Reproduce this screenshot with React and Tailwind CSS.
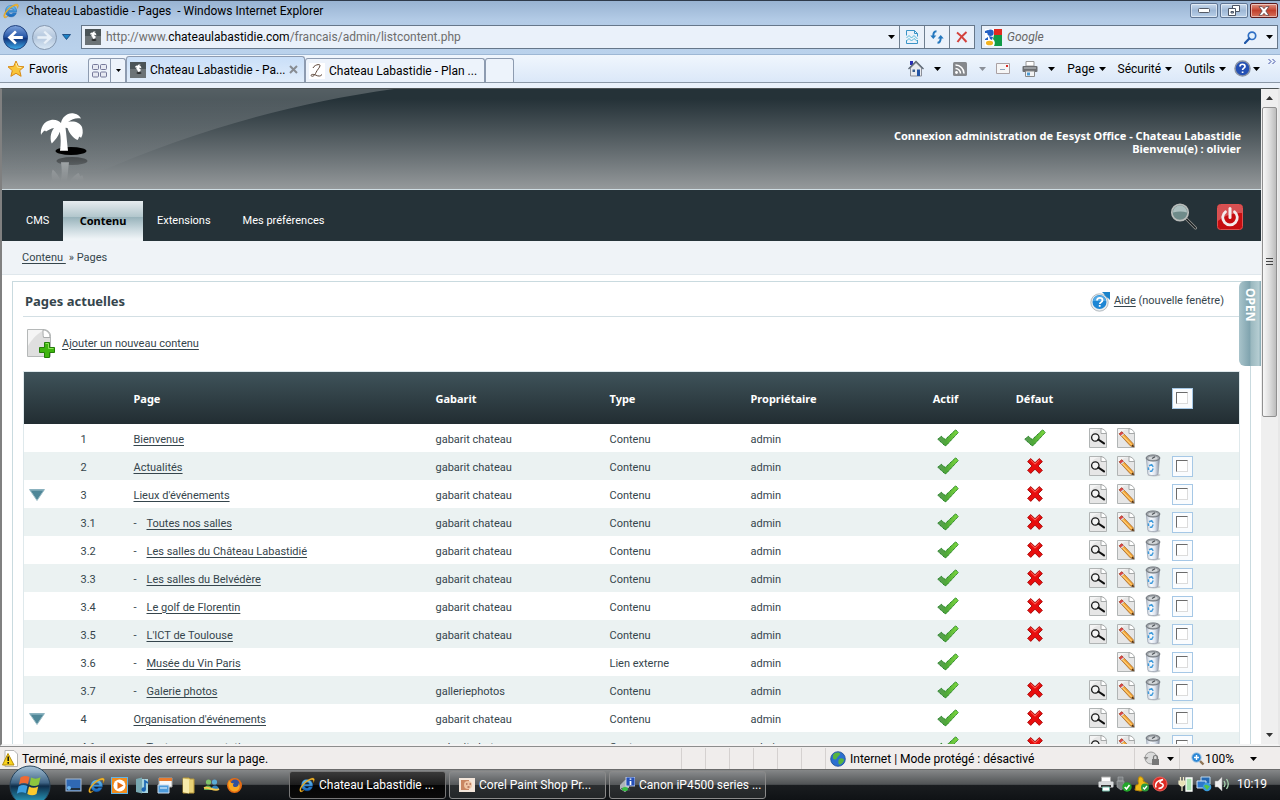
import React from "react";

const pages = [
  { n: "1", name: "Bienvenue", tpl: "gabarit chateau", type: "Contenu", def: "yes", view: true },
  { n: "2", name: "Actualités", tpl: "gabarit chateau", type: "Contenu", def: "no", view: true, trash: true, check: true },
  { n: "3", name: "Lieux d'événements", tpl: "gabarit chateau", type: "Contenu", def: "no", view: true, check: true, open: true },
  { n: "3.1", name: "Toutes nos salles", tpl: "gabarit chateau", type: "Contenu", def: "no", view: true, trash: true, check: true },
  { n: "3.2", name: "Les salles du Château Labastidié", tpl: "gabarit chateau", type: "Contenu", def: "no", view: true, trash: true, check: true },
  { n: "3.3", name: "Les salles du Belvédère", tpl: "gabarit chateau", type: "Contenu", def: "no", view: true, trash: true, check: true },
  { n: "3.4", name: "Le golf de Florentin", tpl: "gabarit chateau", type: "Contenu", def: "no", view: true, trash: true, check: true },
  { n: "3.5", name: "L'ICT de Toulouse", tpl: "gabarit chateau", type: "Contenu", def: "no", view: true, trash: true, check: true },
  { n: "3.6", name: "Musée du Vin Paris", tpl: "", type: "Lien externe", def: "", trash: true, check: true },
  { n: "3.7", name: "Galerie photos", tpl: "galleriephotos", type: "Contenu", def: "no", view: true, trash: true, check: true },
  { n: "4", name: "Organisation d'événements", tpl: "gabarit chateau", type: "Contenu", def: "no", view: true, check: true, open: true },
  { n: "4.1", name: "Toutes nos prestations", tpl: "gabarit chateau", type: "Contenu", def: "no", view: true, trash: true, check: true },
];

/* ---------- shared drawings ---------- */

function Caret({ className = "fill-black" }) {
  return (
    <svg width="7" height="4" viewBox="0 0 7 4" className={"shrink-0 " + className} aria-hidden="true">
      <path d="M0 0h7L3.5 4z" />
    </svg>
  );
}

function IeLogo({ size = 16 }) {
  return (
    <svg width={size} height={size} viewBox="0 0 16 16" className="shrink-0" aria-hidden="true">
      <defs>
        <linearGradient id="ieBlue" x1="0" y1="0" x2="0" y2="1">
          <stop offset="0" stopColor="#6fc8f6" />
          <stop offset="1" stopColor="#1262b8" />
        </linearGradient>
      </defs>
      <path d="M8 2.600a5.600 5.600 0 1 0 5.300 7.500h-3.200A2.700 2.700 0 0 1 5.400 9.200h8.200A5.600 5.600 0 0 0 8 2.600zM5.500 7.200a2.600 2.600 0 0 1 5 0z" fill="url(#ieBlue)" stroke="#1558a6" strokeWidth=".4" />
      <path d="M1.300 14.700C-.8 12.500 3 7.200 6.500 4.500 10.500 1.400 14.300.2 15.200 1.700c.5.900.1 2.300-.9 3.900.3-1.400.2-2.300-.5-2.700-1.600-.8-5.500 1.200-8.400 4.200-2.600 2.700-4 5.500-3.200 6.400.5.500 1.600.3 3-.5-1.500 1.400-3.100 2.500-3.900 1.700z" fill="#f5b92c" stroke="#c8860b" strokeWidth=".3" />
    </svg>
  );
}

function PalmShape() {
  return (
    <path d="M1 24c-1-7 3-14 10-15 5-.6 8 1 10 3 1-6 7-11 13-9.500 4 .8 6 3 7 5-4-1-9 0-13 3.500 6-1.500 12 .5 14 5 1.200 4 1 8-1 11-.5-1-1.200-1.400-2-1.300-.2 1.300-.6 2.200-1.500 3.300-4-2-8-6-10-12l-2-.2c1 7 1.500 15 2.500 23h-8c1-7 1-13-.2-19-1.300 4-4 8-8 11.700C10 29 10 22 14 17c-3 .6-6 2-8 3.500l-1-1C3 20.500 2 22 1 24z" fill="#fff" />
  );
}

function PalmLogo() {
  return (
    <svg width="50" height="76" viewBox="0 0 50 76" aria-hidden="true">
      <defs>
        <linearGradient id="palmFade" x1="0" y1="46" x2="0" y2="70" gradientUnits="userSpaceOnUse">
          <stop offset="0" stopColor="#fff" />
          <stop offset="1" stopColor="#000" />
        </linearGradient>
        <mask id="palmMask"><rect y="42" width="50" height="30" fill="url(#palmFade)" /></mask>
      </defs>
      <ellipse cx="32" cy="40" rx="15.500" ry="4" fill="#000" />
      <g transform="translate(1 0)"><PalmShape /></g>
      <g mask="url(#palmMask)" opacity=".38">
        <ellipse cx="33" cy="50" rx="15.500" ry="4" fill="#000" />
        <g transform="translate(2 91) scale(1 -1)"><PalmShape /></g>
      </g>
    </svg>
  );
}

function PalmFavicon() {
  return (
    <svg width="16" height="16" viewBox="0 0 16 16" className="shrink-0" aria-hidden="true">
      <rect width="16" height="16" fill="#6c7376" />
      <rect width="16" height="7" fill="#4b5457" />
      <path d="M5 5.500c.2-1.500 1.400-2.300 2.700-1.800C8 2.300 9.800 2 11 3c-.9 0-1.500.3-1.800.8 1.500-.1 2.300 1 2 2.700L9.600 5.500 9.500 7h1v2H9.500v1.300H8.200V9H7.500V7h.7L7.500 8 6.300 7l.2-1.800z" fill="#fff" />
      <ellipse cx="9" cy="11" rx="2.600" ry=".8" fill="#111" />
    </svg>
  );
}

function Check() {
  return (
    <svg width="22" height="18" viewBox="0 0 22 18" className="mx-auto block" role="img" aria-label="oui">
      <defs>
        <linearGradient id="okFill" x1="0" y1="0" x2="1" y2="0">
          <stop offset="0" stopColor="#5c9a5c" />
          <stop offset=".4" stopColor="#4fa838" />
          <stop offset="1" stopColor="#7fdb3f" />
        </linearGradient>
      </defs>
      <path d="M.8 10.300l3.400-3 4 3.200L18.600.8l2.700 2.700L9 16.700H8z" fill="url(#okFill)" stroke="#1d7d1d" strokeWidth="1" strokeDasharray="1.500 .5" />
    </svg>
  );
}

function Cross() {
  return (
    <svg width="16" height="16" viewBox="0 0 16 16" className="mx-auto block" role="img" aria-label="non">
      <path d="M3.700.6L8 4.700 12.300.6l3.100 3L11 8l4.400 4.300-3.100 3.100L8 11.200l-4.300 4.200-3.100-3.100L5 8 .6 3.600z" fill="#e80d0d" stroke="#a50808" strokeWidth=".9" strokeLinejoin="round" />
      <path d="M3.700 2L8 6.200 12.300 2" fill="none" stroke="#ff6b5e" strokeWidth="1" />
    </svg>
  );
}

function Sheet() {
  return (
    <>
      <path d="M.5.500h12l5 5v14H.5z" fill="#f4f4f4" stroke="#b0b4b4" />
      <path d="M1 19V8C4 3 8 1.500 12 1v5h5v13z" fill="#e6e6e6" />
      <path d="M12 .5v5h5.500C17 3 15 1 12 .5z" fill="#fff" stroke="#9c9f9f" strokeWidth=".9" />
    </>
  );
}

function ViewIcon() {
  return (
    <svg width="18" height="20" viewBox="0 0 18 20" className="block" aria-hidden="true">
      <Sheet />
      <circle cx="6.300" cy="9.500" r="3.700" fill="#f4f4f4" stroke="#1a1a1a" strokeWidth="1.300" />
      <path d="M9.300 11.500l5.700 3.800" stroke="#111" strokeWidth="2.100" strokeLinecap="round" />
    </svg>
  );
}

function EditIcon() {
  return (
    <svg width="18" height="20" viewBox="0 0 18 20" className="block" aria-hidden="true">
      <Sheet />
      <path d="M2.200 5.800l2.700-2L16 15.500l.9 3.400-3.600-1.100z" fill="#f6a93b" stroke="#9a5a1b" strokeWidth=".7" />
      <path d="M4.800 7l9.700 9.800" stroke="#ffd98c" strokeWidth="1" />
      <path d="M2.200 5.800l2.700-2 1.800 1.900-2.600 2.100z" fill="#e0474a" stroke="#a32d33" strokeWidth=".5" />
      <path d="M4.100 7.900l2.700-2.200" stroke="#d5dade" strokeWidth="1.200" />
      <path d="M15.800 16.500l1.100 2.400-2.500-.7z" fill="#3b2a1e" />
    </svg>
  );
}

function TrashIcon() {
  return (
    <svg width="16" height="23" viewBox="0 0 16 23" className="block" aria-hidden="true">
      <defs>
        <linearGradient id="canFill" x1="0" y1="0" x2="1" y2="0">
          <stop offset="0" stopColor="#b9c3d2" />
          <stop offset=".35" stopColor="#fafcff" />
          <stop offset=".65" stopColor="#dfe6f0" />
          <stop offset="1" stopColor="#858e9f" />
        </linearGradient>
      </defs>
      <ellipse cx="9" cy="21" rx="6.500" ry="1.500" fill="#c4c9cc" />
      <path d="M1.300 4l1.500 16c.2 2 10 2 10.300 0L14.600 4z" fill="url(#canFill)" stroke="#8d95a3" strokeWidth=".6" />
      <ellipse cx="8" cy="4" rx="6.900" ry="3.100" fill="#9ca1a6" stroke="#6c7278" strokeWidth=".9" />
      <ellipse cx="8" cy="4.300" rx="4.700" ry="1.700" fill="#d4d8db" />
      <path d="M7 4.500l3-1.800" stroke="#4b5054" strokeWidth="1.200" />
      <path d="M4 11.800l2.700-1.200 1.500 2.300M8.200 14.500l-1.500 2.800H4.800M3.600 16l-.3-2.600" fill="none" stroke="#3f9bdc" strokeWidth="1.500" />
    </svg>
  );
}

function Box({ label }) {
  return (
    <label className="mt-px flex size-[21px] items-center justify-center border border-[#a6c8e6] bg-[#fafcfe]">
      <input type="checkbox" aria-label={label} className="m-0 block size-3 appearance-none border border-t-[#6b6b6b] border-r-[#dcdcdc] border-b-[#dcdcdc] border-l-[#6b6b6b] bg-white checked:bg-[#4a7fb0]" />
    </label>
  );
}

/* ---------- browser frame ---------- */

function WindowButton({ label, red, children }) {
  return (
    <button
      type="button"
      aria-label={label}
      className={
        "flex h-[15px] w-7 items-center justify-center rounded-[2px] border shadow-[inset_0_0_0_1px_rgba(255,255,255,0.5)] " +
        (red
          ? "border-[#5c1a1c] bg-linear-to-b from-[#dd9383] via-[#c2402c] to-[#d4705b]"
          : "border-[#5f7593] bg-linear-to-b from-[#c8d9ec] via-[#9fb8d6] to-[#b9cfe8]")
      }
    >
      {children}
    </button>
  );
}

function TitleBar() {
  return (
    <header className="flex h-5 items-center gap-1 border-t border-[#2e3a4a] bg-linear-to-b from-[#98b3d2] to-[#b3cbe6] pl-[3px]">
      <IeLogo />
      <h1 className="ml-[3px] flex-1 truncate text-[12px] whitespace-pre">Chateau Labastidie - Pages  - Windows Internet Explorer</h1>
      <div className="flex gap-[2px] pr-[2px]">
        <WindowButton label="Réduire">
          <svg width="12" height="5" viewBox="0 0 12 5"><rect x=".5" y=".5" width="11" height="4" rx="1" fill="#fff" stroke="#555b66" /></svg>
        </WindowButton>
        <WindowButton label="Restaurer">
          <svg width="12" height="11" viewBox="0 0 12 11" fill="#fff" stroke="#4c5564">
            <path d="M4.500.5h7v6h-7z" /><path d="M.5 3.500h7v7h-7z" /><path d="M3 6.500h2.500v1.500H3z" fill="#9fb8d6" />
          </svg>
        </WindowButton>
        <WindowButton label="Fermer" red>
          <svg width="12" height="10" viewBox="0 0 12 10">
            <path d="M1 .6h3.200L6 2.700 7.800.6H11L7.800 5 11 9.400H7.800L6 7.300 4.200 9.400H1L4.200 5z" fill="#fff" stroke="#5b4247" strokeWidth=".8" />
          </svg>
        </WindowButton>
      </div>
    </header>
  );
}

function AddressBar() {
  const cell = "flex w-[25px] shrink-0 items-center justify-center border-l border-[#6f7f90]";
  return (
    <div className="flex h-[34px] items-center bg-linear-to-b from-[#b3cbe6] to-[#bad2ec] pr-[2px] pl-[2px]">
      <div className="flex w-[79px] shrink-0 items-center">
        <button type="button" aria-label="Précédent" className="shrink-0">
          <svg width="27" height="27" viewBox="0 0 27 27">
            <defs>
              <linearGradient id="backBtn" x1="0" y1="0" x2="0" y2="1">
                <stop offset="0" stopColor="#7fa3dc" /><stop offset=".45" stopColor="#2c5cab" /><stop offset=".55" stopColor="#10357e" /><stop offset="1" stopColor="#3fb0ee" />
              </linearGradient>
            </defs>
            <circle cx="13.500" cy="13.500" r="12" fill="url(#backBtn)" stroke="#21427f" />
            <path d="M5.500 13.500L13 6.500v0l1.800 1.800-3.600 3.700h9.600v3h-9.600l3.600 3.700L13 20.500z" fill="#fff" />
          </svg>
        </button>
        <button type="button" aria-label="Suivant" className="ml-[2px] shrink-0">
          <svg width="27" height="27" viewBox="0 0 27 27">
            <defs>
              <linearGradient id="fwdBtn" x1="0" y1="0" x2="0" y2="1">
                <stop offset="0" stopColor="#dbe6f3" /><stop offset=".5" stopColor="#b2c6dd" /><stop offset="1" stopColor="#dbe9f6" />
              </linearGradient>
            </defs>
            <circle cx="13.500" cy="13.500" r="12" fill="url(#fwdBtn)" stroke="#8295ad" />
            <path d="M21.500 13.500L14 6.500l-1.800 1.800 3.600 3.700H6.200v3h9.600l-3.600 3.700 1.800 1.800z" fill="#e8f0f8" stroke="#c2d0e0" strokeWidth=".5" />
          </svg>
        </button>
        <button type="button" aria-label="Pages récentes" className="ml-1 shrink-0">
          <svg width="9" height="6" viewBox="0 0 9 6"><path d="M.5.500h8l-4 5z" fill="#1d83c6" stroke="#123f73" strokeWidth=".8" /></svg>
        </button>
      </div>
      <div className="flex h-6 min-w-0 flex-1 border border-[#66778a] bg-[#eaf1fa]">
        <div className="flex min-w-0 flex-1 items-center gap-1 pl-[3px]">
          <PalmFavicon />
          <div className="min-w-0 flex-1 truncate pl-px text-[12px] text-[#6d6d6d]">
            http://www.<span className="text-black">chateaulabastidie.com</span>/francais/admin/listcontent.php
          </div>
          <button type="button" aria-label="Adresses" className="flex h-full w-4 items-center justify-center"><Caret /></button>
        </div>
        <button type="button" aria-label="Compatibilité" className={cell}>
          <svg width="12" height="14" viewBox="0 0 12 14" fill="none" stroke="#3a93c6">
            <path d="M.5 5.500v-5h8l3 3v3M8.500.5v3h3M.5 10v3.500h11V10" /><path d="M.5 8L3 5.500 5.500 8 8 5.500 11.500 9M.5 11L3 8.500 5.500 11 8 8.500l3.500 3" stroke="#56b8d8" />
          </svg>
        </button>
        <button type="button" aria-label="Actualiser" className={cell}>
          <svg width="14" height="14" viewBox="0 0 14 14" fill="none" stroke="#2477be" strokeWidth="2">
            <path d="M6.500 1.200C4 1.200 3.300 3 3.300 6.500" /><path d="M.3 5.500h6L3.300 9z" fill="#2477be" stroke="none" />
            <path d="M7.500 12.800c2.500 0 3.200-1.800 3.200-5.300" /><path d="M7.700 8.500h6L10.700 5z" fill="#2477be" stroke="none" />
          </svg>
        </button>
        <button type="button" aria-label="Arrêter" className={cell}>
          <svg width="12" height="12" viewBox="0 0 12 12"><path d="M1 1.500c4 3 6 5.500 9.500 9.500M10.500 1C7 4 4 7 1.500 11" fill="none" stroke="#d3413c" strokeWidth="2" /></svg>
        </button>
      </div>
      <form className="ml-[6px] flex h-6 w-[297px] shrink-0 items-center border border-[#66778a] bg-[#eaf1fa] pl-[3px]">
        <svg width="17" height="17" viewBox="0 0 17 17" className="shrink-0" aria-hidden="true">
          <rect width="17" height="17" fill="#fff" />
          <path d="M9 0h8v6H9z" fill="#e02a1f" /><path d="M9 6h8v11H9c1.500-3 1-5-1-7z" fill="#119b47" />
          <path d="M0 2l3-1v3H0zM0 10l3-2v3H0z" fill="#2360c4" />
          <circle cx="5.500" cy="3.800" r="3.200" fill="#2360c4" /><path d="M4 7l4 1-1 3-2-1z" fill="#2360c4" /><ellipse cx="4.500" cy="14" rx="3.600" ry="2.300" fill="#f4b321" />
        </svg>
        <input aria-label="Recherche Google" placeholder="Google" className="ml-[5px] min-w-0 flex-1 bg-transparent text-[12px] italic outline-none placeholder:text-[#666]" />
        <button type="button" aria-label="Rechercher" className="shrink-0 pl-1">
          <svg width="13" height="13" viewBox="0 0 13 13"><circle cx="8" cy="4.800" r="3.700" fill="#e4f1fc" stroke="#2f6fc4" strokeWidth="1.700" /><path d="M5.300 7.500L1 12" stroke="#1f57a8" strokeWidth="2.200" strokeLinecap="round" /></svg>
        </button>
        <button type="button" aria-label="Options de recherche" className="flex h-full w-5 items-center justify-end pr-1"><Caret /></button>
      </form>
    </div>
  );
}

function TabBar() {
  const menu = "flex items-center gap-1 text-[12px]";
  return (
    <div className="flex h-[34px] items-start border-t border-[#9db7d4] bg-[#eaf1fa]">
      <div className="flex h-7 w-full items-end border-b border-[#8a97a6] bg-linear-to-b from-[#f0f6fd] to-[#dbe8f8] pl-[7px]">
        <button type="button" className="flex h-full w-[81px] shrink-0 items-center gap-1 text-[12px]">
          <svg width="18" height="18" viewBox="0 0 18 18" aria-hidden="true"><path d="M9 1l2.300 5.300 5.700.5-4.300 3.800 1.400 5.700L9 13.300l-5.100 3 1.400-5.700L1 6.800l5.700-.5z" fill="#f9c53a" stroke="#d88a14" /><path d="M9 3l1.500 4.200 4 .3" fill="none" stroke="#fff0a8" /></svg>
          Favoris
        </button>
        <div className="flex h-6 w-[38px] shrink-0 rounded-t-[3px] border border-b-0 border-[#8d9bb0] bg-[#edf3fb]">
          <button type="button" aria-label="Aperçu mosaïque" className="flex flex-1 items-center justify-center border-r border-[#8d9bb0]">
            <svg width="15" height="14" viewBox="0 0 15 14" fill="#e6e9f2" stroke="#75799a"><rect x=".5" y=".5" width="6" height="5" rx="1" /><rect x="8.500" y=".5" width="6" height="5" rx="1" /><rect x=".5" y="8" width="6" height="5" rx="1" /><rect x="8.500" y="8" width="6" height="5" rx="1" /></svg>
          </button>
          <button type="button" aria-label="Liste des onglets" className="flex w-[14px] items-center justify-center"><svg width="5" height="3" viewBox="0 0 5 3"><path d="M0 0h5L2.500 3z" /></svg></button>
        </div>
        <div className="flex h-[26px] w-[179px] shrink-0 items-center gap-1 rounded-t-[3px] border border-b-0 border-[#8d9bb0] bg-linear-to-b from-[#c9dff8] to-[#e0ecfa] px-[3px]">
          <PalmFavicon />
          <a href="#onglet" className="min-w-0 flex-1 whitespace-nowrap text-[12px]">Chateau Labastidie - Pa...</a>
          <button type="button" aria-label="Fermer l'onglet" className="px-[3px]">
            <svg width="9" height="9" viewBox="0 0 9 9"><path d="M1 1l7 7M8 1L1 8" stroke="#888c92" strokeWidth="2" /></svg>
          </button>
        </div>
        <div className="flex h-6 w-[180px] shrink-0 items-center gap-1 rounded-t-[3px] border border-b-0 border-[#8d9bb0] bg-[#edf3fb] px-[3px]">
          <svg width="16" height="16" viewBox="0 0 16 16" aria-hidden="true" className="shrink-0"><rect width="16" height="16" fill="#fff" /><path d="M4 5c1-3 7-4.500 7-2.500S8 7 7 9.500 4 14 2.500 13s1-2.500 4-1 5 1.500 6.500-.5" fill="none" stroke="#5b4437" strokeWidth="1" /></svg>
          <a href="#plan" className="min-w-0 whitespace-nowrap text-[12px]">Chateau Labastidie - Plan ...</a>
        </div>
        <button type="button" aria-label="Nouvel onglet" className="h-6 w-[29px] shrink-0 rounded-t-[3px] border border-b-0 border-[#8d9bb0] bg-[#edf3fb]" />
        <nav className="flex h-full min-w-0 flex-1 items-center justify-end gap-3 pr-1" aria-label="Barre de commandes">
          <button type="button" aria-label="Accueil" className="flex items-center gap-[10px]">
            <svg width="16" height="17" viewBox="0 0 16 17"><path d="M2 1h3v4H2z" fill="#2a2fb4" /><path d="M2.500 8v8h11V8L8 2.500z" fill="#e8eaee" stroke="#8b8f99" /><path d="M.5 9L8 1.500 15.500 9" fill="none" stroke="#5c6672" strokeWidth="1.300" /><path d="M9 9.500h3V16H9z" fill="#2456a6" /><path d="M4.500 9.500h2.500V12H4.500z" fill="#3a5f8e" /></svg>
            <Caret />
          </button>
          <button type="button" aria-label="Flux" className="flex items-center gap-3">
            <svg width="14" height="14" viewBox="0 0 14 14"><rect width="14" height="14" rx="1.500" fill="#85888c" /><circle cx="3.500" cy="10.500" r="1.400" fill="#fff" /><path d="M2.500 6.500a5 5 0 0 1 5 5M2.500 3a8.500 8.500 0 0 1 8.500 8.500" fill="none" stroke="#fff" strokeWidth="1.600" /></svg>
            <Caret className="fill-[#8b9098]" />
          </button>
          <button type="button" aria-label="Messagerie" className="-ml-[2px]">
            <svg width="14" height="11" viewBox="0 0 14 11"><path d="M.5.500h13v10H.5z" fill="#f6f6f6" stroke="#aaa1a3" /><path d="M10 2h2v2h-2z" fill="#dc2b26" /><path d="M4 6.500h5" stroke="#8da4bd" /></svg>
          </button>
          <button type="button" aria-label="Imprimer" className="flex items-center gap-[10px]">
            <svg width="16" height="16" viewBox="0 0 16 16"><path d="M4 .5h8V5H4z" fill="#fff" stroke="#999" /><rect x=".5" y="5" width="15" height="6" rx="1" fill="#6b6e72" /><path d="M2 7h12" stroke="#c8ccd0" /><path d="M3.500 10h9v5.500h-9z" fill="#f3f3f3" stroke="#888" /><path d="M5 11.500h3v3H5z" fill="#4c9bd4" /></svg>
            <Caret />
          </button>
          <button type="button" className={menu}>Page <Caret /></button>
          <button type="button" className={menu}>Sécurité <Caret /></button>
          <button type="button" className={menu}>Outils <Caret /></button>
          <button type="button" aria-label="Aide" className="-ml-1 flex items-center gap-[2px]">
            <svg width="17" height="17" viewBox="0 0 17 17"><circle cx="8.500" cy="8.500" r="7.500" fill="#2450b4" stroke="#8a93a3" strokeWidth="1.500" /><path d="M6 6.500C6 3.500 11 3.500 11 6.400c0 1.800-2.400 1.600-2.400 3.600M8.600 11.500v1.600" fill="none" stroke="#fff" strokeWidth="1.700" /></svg>
            <Caret />
          </button>
          <button type="button" aria-label="Plus" className="-ml-1 self-start pt-1">
            <svg width="8" height="5" viewBox="0 0 8 5" fill="none" stroke="#3f4fa4"><path d="M.5 0L3 2.500.5 5M4.500 0L7 2.500 4.500 5" /></svg>
          </button>
        </nav>
      </div>
    </div>
  );
}

/* ---------- site ---------- */

const boldFont = "font-['Noto_Sans','Open_Sans',sans-serif] font-bold";

function SiteHeader() {
  return (
    <div className="relative flex h-[101px] shrink-0 items-center justify-between overflow-hidden border-b border-[#cfdde3] bg-linear-to-b from-[#253238] from-10% to-[#95999b] pr-5 pl-[37px]">
      <svg width="400" height="100" viewBox="0 0 400 100" className="absolute top-0 left-0" aria-hidden="true">
        <defs>
          <linearGradient id="swoosh" x1="0" y1="0" x2="0" y2="1">
            <stop offset="0" stopColor="#fff" stopOpacity=".22" />
            <stop offset=".85" stopColor="#fff" stopOpacity="0" />
          </linearGradient>
        </defs>
        <path d="M0 0h392C290 14 190 42 95 84L0 100z" fill="url(#swoosh)" />
      </svg>
      <a href="#accueil" aria-label="Accueil du site" className="relative mt-5"><PalmLogo /></a>
      <p className={"relative mt-[6px] text-right text-[11px] leading-[13px] text-white " + boldFont}>
        Connexion administration de Eesyst Office - Chateau Labastidie<br />
        Bienvenu(e) : olivier
      </p>
    </div>
  );
}

function MainNav() {
  const item = "flex h-10 items-center px-[14px] text-white";
  return (
    <div className="flex h-[51px] shrink-0 items-end justify-between border-t-2 border-[#253238] bg-[#253238] pr-[18px] pl-[10px] text-[11px]">
      <nav className="flex items-end" aria-label="Navigation principale">
        <a href="#cms" className={item + " w-[51px]"}>CMS</a>
        <a href="#contenu" className={"flex h-10 w-20 items-center justify-center bg-[linear-gradient(to_bottom,#e6ecef_0%,#b3c7cd_39%,#97b2ba_40%,#c9d8de_70%,#eff4f7_95%)] text-black " + boldFont}>Contenu</a>
        <a href="#extensions" className={item}>Extensions</a>
        <a href="#preferences" className={item + " ml-1"}>Mes préférences</a>
      </nav>
      <div className="flex items-center gap-[19px] self-center">
        <button type="button" aria-label="Rechercher">
          <svg width="28" height="27" viewBox="0 0 28 27">
            <path d="M15.500 15l10 10" stroke="#9b9b98" strokeWidth="3" strokeLinecap="round" /><path d="M16 15.500l9.500 9.500" stroke="#1b2022" strokeWidth="1.500" strokeLinecap="round" />
            <circle cx="10" cy="9.500" r="8.200" fill="#6f8b8a" stroke="#b9bcba" strokeWidth="1.700" /><path d="M3 9.500a7 7 0 0 1 14 0c-4-1.500-9-1.500-14 0z" fill="#bccccc" opacity=".8" />
          </svg>
        </button>
        <button type="button" aria-label="Déconnexion">
          <svg width="26" height="26" viewBox="0 0 26 26">
            <rect x=".5" y=".5" width="25" height="25" rx="3" fill="#c60d10" stroke="#e0514f" />
            <path d="M1 3.500Q1 1 3.500 1h19Q25 1 25 3.500V9C17 9 8 11 1 17z" fill="#fff" opacity=".28" />
            <path d="M8.500 7.800a7.300 7.300 0 1 0 9 0" fill="none" stroke="#f3ecec" strokeWidth="2.800" strokeLinecap="round" /><path d="M13 4.500v9" stroke="#f3ecec" strokeWidth="3" strokeLinecap="round" />
          </svg>
        </button>
      </div>
    </div>
  );
}

function PagesTable() {
  const th = "pt-[3px] text-left " + boldFont;
  const thCenter = "pt-[3px] text-center " + boldFont;
  const td = "pt-[5px]";
  return (
    <table className="w-full table-fixed border-collapse border border-[#dfe9ec] text-[11px]">
      <colgroup>
        <col className="w-[57px]" /><col className="w-[53px]" /><col /><col className="w-[174px]" /><col className="w-[141px]" /><col className="w-[154px]" />
        <col className="w-[86px]" /><col className="w-[88px]" /><col className="w-[33px]" /><col className="w-7" /><col className="w-7" /><col className="w-[72px]" />
      </colgroup>
      <thead>
        <tr className="h-[52px] bg-linear-to-b from-[#3f535a] to-[#222d32] text-white">
          <td /><td />
          <th scope="col" className={th}>Page</th>
          <th scope="col" className={th}>Gabarit</th>
          <th scope="col" className={th}>Type</th>
          <th scope="col" className={th}>Propriétaire</th>
          <th scope="col" className={thCenter + " pr-1"}>Actif</th>
          <th scope="col" className={thCenter}>Défaut</th>
          <td /><td /><td />
          <td className="pl-1"><Box label="Tout sélectionner" /></td>
        </tr>
      </thead>
      <tbody>
        {pages.map((p, i) => (
          <tr key={p.n} className={"h-7 " + (i % 2 ? "bg-[#ebf2f2]" : "bg-white")}>
            <td className="pt-[2px] pl-[5px]">
              {p.open && (
                <button type="button" aria-label={"Replier " + p.name} className="block">
                  <svg width="16" height="12" viewBox="0 0 16 12"><path d="M.5.500h15L8 11.500z" fill="#4f8798" stroke="#9dbdc7" /><path d="M1 1h14" stroke="#86afbd" strokeWidth="1.500" /></svg>
                </button>
              )}
            </td>
            <td className={td}>{p.n}</td>
            <td className={td + " whitespace-nowrap"}>
              {p.n.includes(".") && <span className="inline-block w-[13px]">-</span>}
              <a href={"#page-" + p.n} className="underline underline-offset-2">{p.name}</a>
            </td>
            <td className={td}>{p.tpl}</td>
            <td className={td}>{p.type}</td>
            <td className={td}>admin</td>
            <td><Check /></td>
            <td>{p.def === "yes" ? <Check /> : p.def === "no" ? <Cross /> : null}</td>
            <td className="pl-[10px]">{p.view && <button type="button" aria-label={"Voir " + p.name} className="block"><ViewIcon /></button>}</td>
            <td className="pl-[5px]"><button type="button" aria-label={"Modifier " + p.name} className="block"><EditIcon /></button></td>
            <td className="pl-[5px]">{p.trash && <button type="button" aria-label={"Supprimer " + p.name} className="block"><TrashIcon /></button>}</td>
            <td className="pl-1">{p.check && <Box label={"Sélectionner " + p.name} />}</td>
          </tr>
        ))}
      </tbody>
    </table>
  );
}

function Site() {
  return (
    <div className="relative flex min-w-0 flex-1 flex-col overflow-hidden bg-white text-[#35454c]">
      <SiteHeader />
      <MainNav />
      <div className="flex h-[34px] shrink-0 items-center gap-[3px] border-b border-[#dfe7ec] bg-[#eff3f7] pt-[2px] pl-5 text-[11px]">
        <a href="#contenu" className="underline underline-offset-2 whitespace-pre">Contenu </a>
        <span>» Pages</span>
      </div>
      <main className="mt-[6px] mr-[10px] ml-[10px] shrink-0 border border-[#c9dadf] px-[10px]">
        <div className="flex h-[35px] items-center justify-between border-b border-[#d3dfe4] pt-[5px] pr-4 pl-[2px]">
          <h2 className={"text-[13px] " + boldFont}>Pages actuelles</h2>
          <p className="flex items-center gap-[3px] text-[11px]">
            <svg width="21" height="20" viewBox="0 0 21 20" aria-hidden="true">
              <path d="M12 0h8v8z" fill="#1b83c9" /><circle cx="9.500" cy="10.500" r="8.700" fill="#e9edef" stroke="#a3acb2" strokeWidth=".8" /><circle cx="9.500" cy="10" r="7" fill="#1e86d4" /><path d="M3 9a6.600 6.600 0 0 1 13 0z" fill="#75c1f0" opacity=".6" /><path d="M14 2.500L19.500.5 17.500 6z" fill="#1b83c9" />
              <path d="M7 8.500c0-3.500 5.500-3.200 5.500-.2 0 2-2.700 1.800-2.700 3.700M9.700 13v1.800" fill="none" stroke="#fff" strokeWidth="1.800" />
            </svg>
            <span><a href="#aide" className="underline underline-offset-2">Aide</a> (nouvelle fenêtre)</span>
          </p>
        </div>
        <div className="flex h-[54px] items-center pl-[3px]">
          <a href="#ajouter" className="flex items-center gap-[6px] text-[11px] underline underline-offset-2">
            <svg width="30" height="32" viewBox="0 0 30 32" aria-hidden="true">
              <path d="M1.500 1.500h17c4 1 6 3 6 7v20h-23z" fill="#f5f5f5" stroke="#b5b8b8" /><path d="M2 28V18C7 9 13 5 18 2l6 7v19z" fill="#dfdfdf" /><path d="M17 2c0 3 0 5 .5 7.500H24C24 5 21 2 17 2z" fill="#fff" stroke="#a9acac" />
              <path d="M18.500 14.500h5v5h5v5h-5v5h-5v-5h-5v-5h5z" fill="#3fb50f" stroke="#237d08" /><path d="M19.500 15.500h3v5h5" fill="none" stroke="#8de35a" />
            </svg>
            Ajouter un nouveau contenu
          </a>
        </div>
        <PagesTable />
      </main>
      <button type="button" className={"absolute top-48 right-0 flex h-[85px] w-[22px] items-center justify-start rounded-l-md bg-[linear-gradient(to_right,#a9c4cb_0%,#7fa3ae_50%,#9ab8bf_54%,#b5cdd2_90%,#86a9b3_100%)] pt-[7px] text-[12px] leading-[20px] text-white [writing-mode:vertical-rl] " + boldFont}>
        OPEN
      </button>
    </div>
  );
}

function ScrollBar() {
  return (
    <div className="flex w-[17px] shrink-0 flex-col items-center bg-[#efefef]" aria-hidden="true">
      <div className="flex h-[18px] items-center"><svg width="7" height="4" viewBox="0 0 7 4"><path d="M0 4h7L3.500 0z" fill="#333" /></svg></div>
      <div className="flex h-[310px] w-[15px] items-center justify-center rounded-[2px] border border-[#909090] bg-linear-to-r from-[#f8f8f8] via-[#dedede] to-[#bcbcbc]">
        <svg width="7" height="8" viewBox="0 0 7 8"><path d="M0 .5h7M0 3.500h7M0 6.500h7" stroke="#444" /></svg>
      </div>
      <div className="flex-1" />
      <div className="flex h-[18px] items-center"><Caret className="fill-[#333]" /></div>
    </div>
  );
}

/* ---------- status and task bars ---------- */

function Globe() {
  return (
    <svg width="16" height="16" viewBox="0 0 16 16" aria-hidden="true"><circle cx="8" cy="8" r="7.300" fill="#2b6fd0" stroke="#1c4c93" strokeWidth=".8" /><path d="M3 4c2-3 6-3 7-1.500S8 5 7 7s-3 2-4 .5zM9 8c2-1.500 5-.5 5 1s-2 4-4 4.500S8 10 9 8z" fill="#57b53d" /></svg>
  );
}

function StatusBar() {
  return (
    <footer className="flex h-6 shrink-0 items-stretch border-t border-b border-t-[#8d8d8d] border-b-[#6b6b6b] bg-[#f0edec] pt-px text-[12px]">
      <div className="flex min-w-0 flex-1 items-center gap-1 pl-[2px]">
        <svg width="16" height="17" viewBox="0 0 16 17" aria-hidden="true"><path d="M3 .5h9l3.500 3.500v12.500H3z" fill="#fff" stroke="#b5b5b5" /><path d="M6 3.500L12 15H.5z" fill="#f8d21c" stroke="#b78e0a" /><path d="M6.200 6.500v4.500M6.200 12v1.700" stroke="#111" strokeWidth="1.500" /></svg>
        <span className="whitespace-nowrap">Terminé, mais il existe des erreurs sur la page.</span>
      </div>
      <div className="flex shrink-0">
        {[0, 1, 2, 3, 4, 5].map((k) => <span key={k} className="w-6 border-l border-[#d5d1d0]" />)}
      </div>
      <div className="flex w-[309px] shrink-0 items-center gap-1 border-l border-[#d5d1d0] pl-1">
        <Globe />
        <span className="whitespace-nowrap">Internet | Mode protégé : désactivé</span>
      </div>
      <button type="button" aria-label="Confidentialité" className="flex w-[45px] shrink-0 items-center gap-[7px] border-l border-[#d5d1d0] pl-2">
        <svg width="17" height="16" viewBox="0 0 17 16"><circle cx="8" cy="7" r="6" fill="#dadada" stroke="#9a9a9a" /><path d="M.5 6h5L3 9z" fill="#8d8d8d" /><rect x="9" y="8" width="7" height="6" fill="#777" /><path d="M10.500 8V6c0-2 4-2 4 0v2" fill="none" stroke="#777" strokeWidth="1.200" /></svg>
        <Caret />
      </button>
      <button type="button" className="flex w-[101px] shrink-0 items-center border-l border-[#d5d1d0] pl-[11px]">
        <svg width="14" height="14" viewBox="0 0 14 14"><path d="M8.500 8.500l4 4" stroke="#8f7556" strokeWidth="2.400" /><circle cx="5.500" cy="5.500" r="4.800" fill="#2b87d6" stroke="#bcd3e6" /><path d="M5.500 3v5M3 5.500h5" stroke="#fff" strokeWidth="1.400" /></svg>
        <span className="w-[45px] text-left">100%</span>
        <Caret />
      </button>
    </footer>
  );
}

function TaskButton({ active, icon, children }) {
  return (
    <button
      type="button"
      className={
        "flex h-7 w-[157px] items-center gap-1 rounded-[3px] border px-[9px] text-[12px] text-white " +
        (active
          ? "border-[#777] bg-[linear-gradient(to_bottom,#3a3a3a_0%,#1c1c1c_49%,#050505_50%,#0a0a0a_100%)]"
          : "border-[#8a8a8a] bg-[linear-gradient(to_bottom,#86888a_0%,#55585a_49%,#2c2f31_50%,#232628_100%)]")
      }
    >
      {icon}
      <span className="whitespace-nowrap">{children}</span>
    </button>
  );
}

function Quick({ label, children }) {
  return (
    <button type="button" aria-label={label}>
      <svg width="17" height="17" viewBox="0 0 17 17" className="block">{children}</svg>
    </button>
  );
}

function TaskBar() {
  return (
    <footer className="flex h-[30px] shrink-0 items-center bg-[linear-gradient(to_bottom,#858788_0%,#505355_48%,#1a1d20_50%,#0f1215_100%)] pr-[13px] pl-[9px]">
      <button type="button" aria-label="Démarrer" className="relative -mt-[5px] -mb-[7px] shrink-0">
        <svg width="42" height="42" viewBox="0 0 42 42" className="block">
          <defs>
            <linearGradient id="orb" x1="0" y1="0" x2="0" y2="1"><stop offset="0" stopColor="#a9c4d8" /><stop offset=".42" stopColor="#3f6485" /><stop offset=".5" stopColor="#0e2c49" /><stop offset="1" stopColor="#2fb4d6" /></linearGradient>
          </defs>
          <circle cx="21" cy="21" r="20" fill="url(#orb)" stroke="#27445c" />
          <path d="M11.500 12.500c3-2 6-2 9-.5L19 19c-3-1.300-6-1.200-9 .5z" fill="#ee6a35" /><path d="M22 12.500c3 1.500 6 1.600 9.500-.2l-1.800 7.500c-3 1.700-6 1.600-9.200 0z" fill="#8cc63e" />
          <path d="M9.500 21.500c3-1.800 6-1.800 9-.5l-1.700 7.300c-3-1.400-6-1.300-9 .5z" fill="#3d9fe0" /><path d="M20 21.600c3 1.600 6 1.600 9.200-.1L27.500 29c-3 1.700-6 1.500-9.200 0z" fill="#fbc92e" />
        </svg>
      </button>
      <div className="ml-[14px] flex w-[224px] shrink-0 gap-[6px]">
        <Quick label="Bureau"><rect x="1" y="2" width="15" height="12" fill="#3069b4" stroke="#a7bcd3" /><path d="M2 12h13" stroke="#20303f" strokeWidth="2" /><circle cx="4" cy="11" r="2" fill="#6bb3ee" /></Quick>
        <button type="button" aria-label="Internet Explorer"><IeLogo size={17} /></button>
        <Quick label="Lecteur multimédia"><rect x=".5" y=".5" width="16" height="16" fill="#f08c1e" stroke="#5fb3e8" /><circle cx="8.500" cy="8.500" r="6" fill="#fff" /><path d="M6.500 5l6 3.500-6 3.500z" fill="#e46b10" /></Quick>
        <Quick label="Musique"><path d="M2 2l6-1.500v16L2 15z" fill="#79a9b2" /><path d="M8 2h6v14H8z" fill="#a7d4df" /><path d="M11 12V4l3 2" fill="none" stroke="#1c66b4" strokeWidth="1.700" /><circle cx="9.700" cy="12.500" r="2.200" fill="#1c66b4" /></Quick>
        <Quick label="Calendrier"><path d="M2 1h13v9H2z" fill="#f7f7f7" stroke="#a8a8a8" /><path d="M2 1h13v3H2z" fill="#e87b2f" /><path d="M1 8h11v8H1z" fill="#4d9bdb" stroke="#cde" /><path d="M3 11h7" stroke="#fff" /></Quick>
        <Quick label="Explorateur"><path d="M3 1h6l1 1h4v14H3z" fill="#e9d277" stroke="#b8993b" /><path d="M3 1.500l6 1v14L3 15z" fill="#f8ebaa" /></Quick>
        <Quick label="Messenger"><circle cx="5.500" cy="5" r="2.600" fill="#7fc46a" /><circle cx="11.500" cy="5" r="2.600" fill="#5cabd6" /><path d="M1 13c0-6 8-6 8 0z" fill="#5fae49" /><path d="M8 13c0-6 8-6 8 0z" fill="#3282bb" /><path d="M1 11c5-2 10 4 15 1" fill="none" stroke="#f4c952" strokeWidth="2" /></Quick>
        <Quick label="Firefox"><circle cx="8.500" cy="8.500" r="7.500" fill="#e66b13" /><circle cx="9" cy="7" r="4.500" fill="#30509c" /><path d="M3 3c1 3 3 3 5 3.500-2 1-1 4 2 3.500 2-.4 3-2 2.500-4 3 4 0 9-4.500 8.500S1 9 3 3z" fill="#f8a722" /></Quick>
      </div>
      <div className="flex shrink-0 gap-[3px]">
        <TaskButton active icon={<IeLogo />}>Chateau Labastidie ...</TaskButton>
        <TaskButton icon={<svg width="16" height="14" viewBox="0 0 16 14" className="shrink-0"><rect width="16" height="14" fill="#f4e6da" /><path d="M2 2h8v10H2z" fill="#c98662" /><circle cx="9" cy="7" r="4" fill="#eec4a4" /><path d="M7 6h1.500M10.500 6H12M8.500 9h2" stroke="#8c3b2b" /></svg>}>Corel Paint Shop Pr...</TaskButton>
        <TaskButton icon={<svg width="16" height="16" viewBox="0 0 16 16" className="shrink-0"><path d="M1 8l5-5h4v9l-4 3-5-3z" fill="#aeb4b8" /><path d="M2 11h9v3H4z" fill="#3c4247" /><ellipse cx="6" cy="12" rx="3" ry="2" fill="#39bf45" /><rect x="7" width="9" height="9" fill="#244fb8" stroke="#dfe6f5" strokeWidth=".8" /><path d="M11.500 4v4M11.500 1.500v1.300" stroke="#fff" strokeWidth="1.700" /></svg>}>Canon iP4500 series ...</TaskButton>
      </div>
      <div className="flex min-w-0 flex-1 items-center justify-end gap-[2px] pb-[3px]">
        <svg width="16" height="16" viewBox="0 0 16 16"><path d="M3.500 1h9v5h-9z" fill="#fff" stroke="#aaa" /><rect x=".5" y="5.500" width="15" height="6" rx="1" fill="#d8dadc" /><path d="M3 9h10v2H3z" fill="#333" /><path d="M4.500 11h7v4h-7z" fill="#fff" stroke="#7ba" /></svg>
        <svg width="16" height="16" viewBox="0 0 16 16"><path d="M2 1h5v4H2zM1 5h7v7l-3 2-4-3z" fill="#7c8082" stroke="#a9adaf" strokeWidth=".6" /><circle cx="11" cy="11" r="4.700" fill="#23a62b" /><path d="M8.700 11l1.800 2 3-4" fill="none" stroke="#fff" strokeWidth="1.600" /></svg>
        <svg width="16" height="16" viewBox="0 0 16 16"><path d="M5 1c3-1 5 2 4 4l5 3-2 6-6 1-5-1 1-5c3 0 3-2 2-4z" fill="#f0bb17" stroke="#b98708" /><circle cx="11" cy="11.500" r="4" fill="#2c9a3a" /><path d="M9 11.500l1.500 1.500 2.500-3" fill="none" stroke="#fff" strokeWidth="1.300" /></svg>
        <svg width="16" height="16" viewBox="0 0 16 16" className="mr-2"><circle cx="8" cy="8" r="7" fill="#dd2b24" stroke="#f0605a" /><path d="M4 11.500C2.500 7 6 4 11 3.500 7.500 5 7 7 9.500 7.500c3 .8 2 4.500-3 5" fill="none" stroke="#fff" strokeWidth="1.500" /></svg>
        <svg width="16" height="16" viewBox="0 0 16 16"><path d="M8 2h6v13H8z" fill="#a9e3ae" stroke="#fff" strokeWidth="1.300" /><path d="M2.500 1v4M5.500 1v4M1 5h6v3L5 10H3L1 8zM4 10v5" fill="#e6e1b5" stroke="#eee9c5" strokeWidth="1.200" /></svg>
        <svg width="16" height="16" viewBox="0 0 16 16"><path d="M5 1h9v7H5z" fill="#2367b1" stroke="#bed9ef" /><path d="M1 5h9v7H1z" fill="#2c78cb" stroke="#d3e5f4" /><circle cx="11" cy="11" r="4.300" fill="#3a9bdc" /><path d="M8 10c3-3 4 1 6 0l-3 4z" fill="#54c447" /></svg>
        <svg width="16" height="16" viewBox="0 0 16 16"><path d="M1 5h3l4-4v14l-4-4H1z" fill="#eee" stroke="#999" strokeWidth=".5" /><path d="M10 5q2 3 0 6M12.500 3q3.500 5 0 10" fill="none" stroke="#a8d6b0" strokeWidth="1.300" /></svg>
        <time className="ml-[5px] text-[12px] text-white">10:19</time>
      </div>
    </footer>
  );
}

export default function App() {
  return (
    <div className="flex h-screen flex-col overflow-hidden bg-[#b9d1ea] font-['Roboto','Open_Sans',sans-serif] text-black">
      <TitleBar />
      <AddressBar />
      <TabBar />
      <div className="flex min-h-0 flex-1 border-t border-r-2 border-b-2 border-l-2 border-t-[#4d5355] border-r-[#e7e7e7] border-b-[#f4f4f4] border-l-[#808080]">
        <Site />
        <ScrollBar />
      </div>
      <StatusBar />
      <TaskBar />
    </div>
  );
}
